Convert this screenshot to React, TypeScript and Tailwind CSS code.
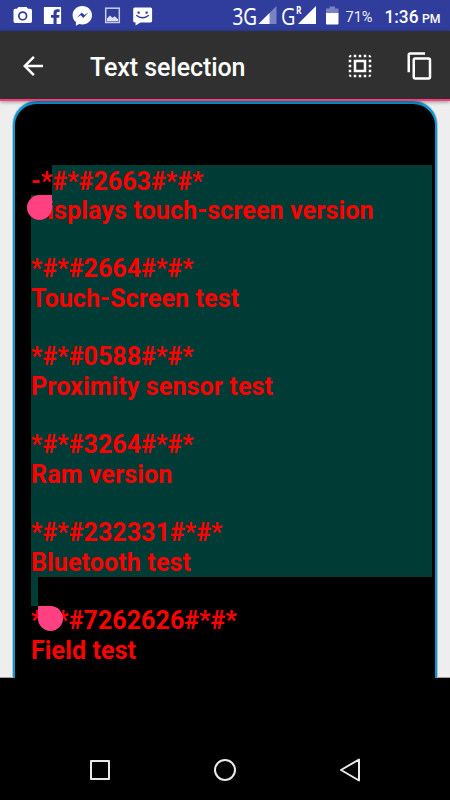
import React from "react";
import { MdArrowBack, MdSelectAll, MdContentCopy } from "react-icons/md";

const lines = [
  "-*#*#2663#*#*",
  "Displays touch-screen version",
  "",
  "*#*#2664#*#*",
  "Touch-Screen test",
  "",
  "*#*#0588#*#*",
  "Proximity sensor test",
  "",
  "*#*#3264#*#*",
  "Ram version",
  "",
  "*#*#232331#*#*",
  "Bluetooth test",
  "",
  "*#*#7262626#*#*",
  "Field test",
];

function NotificationIcons() {
  return (
    <svg width="160" height="31" viewBox="0 0 160 31" className="shrink-0" fill="#fff">
      <path
        fillRule="evenodd"
        d="M18.500 7h8l1.500 1.800h2.300q1.700 0 1.700 1.700v10.800q0 1.700-1.700 1.700H15.200q-1.700 0-1.700-1.700V10.500q0-1.700 1.700-1.700h1.800zM22.700 11.200a4.700 4.700 0 1 0 0 9.400a4.700 4.700 0 0 0 0-9.400z"
      />
      <circle cx="22.700" cy="15.900" r="3" />
      <path d="M44.700 7h15.600q.8 0 .8.800v15.500q0 .8-.8.800h-3.700v-6.300h2.500l.4-2.700h-2.900v-1.700q0-1.400 1.500-1.400h1.500V9.300h-2.300q-3.800 0-3.800 3.700v2.100h-2.500v2.700h2.500v6.300h-8.800q-.8 0-.8-.8V7.800q0-.8.8-.8z" />
      <path
        fillRule="evenodd"
        d="M82.300 6c-5.500 0-9.700 4-9.700 9.200c0 2.900 1.300 5.300 3.300 6.900v3.700l3.300-1.800c1 .3 2 .4 3.100.4c5.500 0 9.700-4 9.700-9.200S87.800 6 82.300 6zM76.800 17.700l5-5.200l2.500 2.500l4-2.400l-5 5.300l-2.500-2.600z"
      />
      <rect x="105.700" y="8.200" width="13.600" height="14.300" fill="none" stroke="#c5cbe9" strokeWidth="1.500" />
      <path d="M107 18.500l3-3l2.300 2.300l2.500-1.500l3.200 3v2h-11z" fill="#dce0f4" />
      <path
        fillRule="evenodd"
        d="M134.800 7.500h15.700q1.600 0 1.600 1.600v11.700q0 1.600-1.600 1.600h-10l-4.900 3v-3h-.8q-1.600 0-1.600-1.600V9.100q0-1.600 1.600-1.600zM137.500 11.500v2.200h2.200v-2.200zM145.500 11.500v2.200h2.200v-2.200zM135.800 15.800q6.800 5.500 13.500 0l-.8-1q-6 4.600-11.900 0z"
      />
    </svg>
  );
}

function SystemStatus() {
  return (
    <svg width="225" height="31" viewBox="225 0 225 31" className="shrink-0" fill="#fff">
      <text x="232.500" y="24.500" fontSize="23" textLength="24.500" lengthAdjust="spacingAndGlyphs" stroke="#fff" strokeWidth="0.200" className="font-['Open_Sans',sans-serif]">3G</text>
      <path d="M276.500 6v18h-18z" fill="#7983c2" />
      <path d="M269.500 13v11h-11z" />
      <text x="281" y="24.500" fontSize="23" textLength="14.500" lengthAdjust="spacingAndGlyphs" className="font-['Open_Sans',sans-serif]">G</text>
      <text x="296" y="14" fontSize="10" textLength="5.500" lengthAdjust="spacingAndGlyphs" className="font-['Open_Sans',sans-serif] font-bold">R</text>
      <path d="M316 6v18h-18z" />
      <path d="M329.500 6.500h5.500v2h3.500v5h-12.500v-5h3.500z" fill="#7983c2" />
      <path d="M326 13h12.500v10.500q0 1-1 1H327q-1 0-1-1z" />
      <text x="345.500" y="21.800" fontSize="15.500" textLength="27" lengthAdjust="spacingAndGlyphs" fill="#eceefa" className="font-[Roboto,sans-serif]">71%</text>
      <text x="384.500" y="23" fontSize="17.500" textLength="34" lengthAdjust="spacingAndGlyphs" className="font-[Roboto,sans-serif] font-medium">1:36</text>
      <text x="422" y="23" fontSize="13" textLength="18.500" lengthAdjust="spacingAndGlyphs" className="font-[Roboto,sans-serif] font-medium">PM</text>
    </svg>
  );
}

export default function App() {
  return (
    <div className="flex h-[800px] w-[450px] flex-col overflow-hidden bg-black font-[Roboto,sans-serif]">
      <div className="flex h-[31px] shrink-0 justify-between bg-[#303d9c]">
        <NotificationIcons />
        <SystemStatus />
      </div>
      <header className="z-10 flex h-[70px] shrink-0 items-center border-b-[2px] border-[#ff3b7d] bg-[#303030] pr-[15px] pl-[18px] text-white shadow-[0_1px_4px_rgba(0,0,0,0.4)]">
        <MdArrowBack size={30} className="mt-[2px]" />
        <h1 className="ml-[42px] flex-1 pt-[6px] text-[25px] leading-[30px] font-medium tracking-[-0.070px]">Text selection</h1>
        <MdSelectAll size={30} className="mt-[2px]" />
        <MdContentCopy size={30} className="mt-[2px] ml-[30px]" />
      </header>

      <main className="flex h-[577px] shrink-0 items-start overflow-hidden bg-[linear-gradient(to_top,#a0a0a0_1px,#eeeeee_1px)] px-[13px]">
        <div className="h-[620px] flex-1 rounded-[24px] border-[2px] border-t-[3px] border-[#0d97cf] bg-black pt-[61px] pl-[16px] shadow-[0_0_0_1px_#a9c9d6]">
          <div className="relative w-[401px]">
            <div className="absolute top-0 left-[21px] h-[30px] w-[380px] bg-[#003c36]" />
            <div className="absolute top-[30px] left-0 h-[382px] w-[401px] bg-[#003c36]" />
            <div className="absolute top-[412px] left-0 h-[29px] w-[7px] bg-[#003c36]" />
            <div className="relative pt-[1.500px] text-[25px] leading-[29.333px] font-bold whitespace-pre text-[#ff0000]">
              {lines.map((line, index) => (
                <div
                  key={index}
                  className={line.includes("#") ? "h-[29.333px] tracking-[0.050px]" : "h-[29.333px] tracking-[0.120px]"}
                >
                  {line}
                </div>
              ))}
            </div>
            <div className="absolute top-[30px] left-[-4px] size-[25px] rounded-full rounded-tr-none bg-[#ff4081]" />
            <div className="absolute top-[441px] left-[6.500px] size-[25px] rounded-full rounded-tl-none bg-[#ff4081]" />
          </div>
        </div>
      </main>

      <nav className="mt-auto flex h-[60px] items-center justify-between px-[85px]">
        <svg width="30" height="30" viewBox="0 0 30 30" fill="none" stroke="#e8e8e8" strokeWidth="2" strokeLinejoin="round">
          <rect x="6" y="6" width="18" height="18" />
        </svg>
        <svg width="30" height="30" viewBox="0 0 30 30" fill="none" stroke="#e8e8e8" strokeWidth="2">
          <circle cx="15" cy="15" r="10" />
        </svg>
        <svg width="30" height="30" viewBox="0 0 30 30" fill="none" stroke="#e8e8e8" strokeWidth="2" strokeLinejoin="round">
          <path d="M24 4.500v21L6 15z" />
        </svg>
      </nav>
    </div>
  );
}
